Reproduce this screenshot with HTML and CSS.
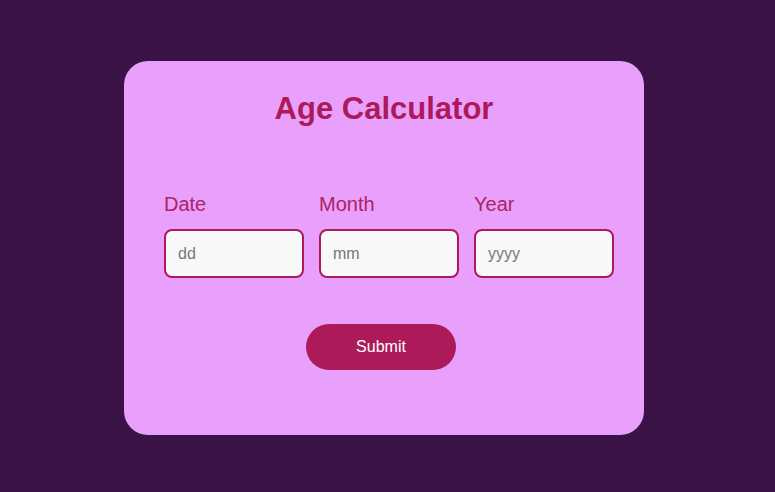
FILE: index.html
```html
<!DOCTYPE html>
<html>
<head>
<meta charset="utf-8">
<link rel="stylesheet" href="styles.css">
</head>
<body>
<div class="card">
  <h1 class="title">Age Calculator</h1>
  <div class="fields">
    <div class="field">
      <label class="label">Date</label>
      <input class="input" type="text" placeholder="dd">
    </div>
    <div class="field">
      <label class="label">Month</label>
      <input class="input" type="text" placeholder="mm">
    </div>
    <div class="field">
      <label class="label">Year</label>
      <input class="input" type="text" placeholder="yyyy">
    </div>
  </div>
  <div class="actions">
    <button class="submit">Submit</button>
  </div>
</div>
</body>
</html>
```
FILE: styles.css
```css
html, body {
  margin: 0;
  padding: 0;
}
body {
  background: #3b1246;
  width: 775px;
  height: 492px;
  font-family: "Liberation Sans", Arial, sans-serif;
  padding: 61px 0 0 124px;
  box-sizing: border-box;
}
.card {
  width: 520px;
  height: 374px;
  box-sizing: border-box;
  background: #e9a0fc;
  border-radius: 24px;
  padding: 30px 40px 0 40px;
}
.title {
  margin: 0;
  text-align: center;
  font-size: 31px;
  line-height: 35px;
  font-weight: bold;
  color: #ad1a5a;
}
.fields {
  display: flex;
  gap: 15px;
  margin-top: 67px;
}
.field {
  display: flex;
  flex-direction: column;
  width: 140px;
}
.label {
  font-size: 20px;
  line-height: 23px;
  color: #ad2363;
  margin-bottom: 13px;
}
.input {
  box-sizing: border-box;
  width: 140px;
  height: 49px;
  border: 2px solid #ad1a5a;
  border-radius: 8px;
  background: #f8f8f8;
  padding: 0 12px;
  font-family: "Liberation Sans", Arial, sans-serif;
  font-size: 16px;
  color: #333;
  outline: none;
  margin: 0;
}
.input::placeholder {
  color: #777;
}
.actions {
  display: flex;
  justify-content: center;
  margin-top: 46px;
  padding-right: 6px;
}
.submit {
  width: 150px;
  height: 46px;
  border: none;
  border-radius: 23px;
  background: #ad1a5a;
  color: #fff;
  font-family: "Liberation Sans", Arial, sans-serif;
  font-size: 16px;
  cursor: pointer;
}
```
